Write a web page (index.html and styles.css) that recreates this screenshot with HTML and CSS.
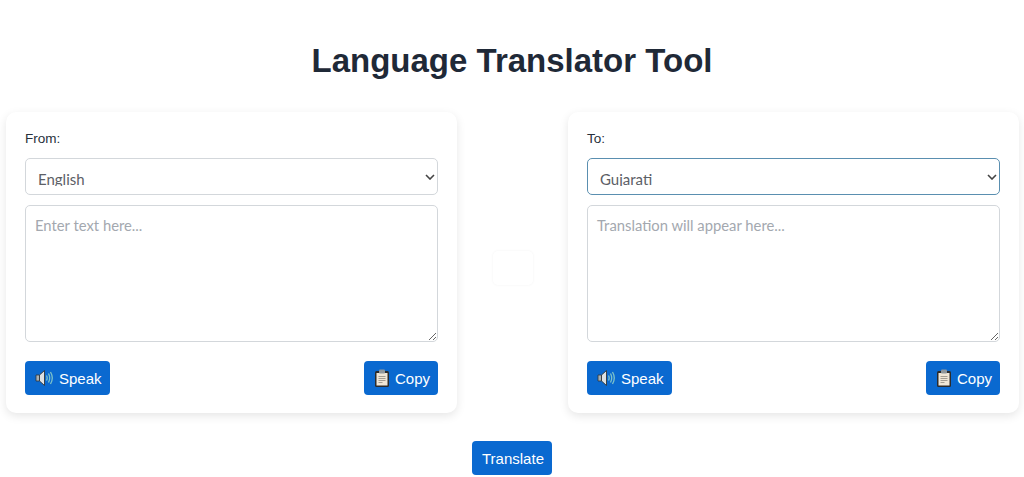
FILE: index.html
```html
<!DOCTYPE html>
<html lang="en">
	<head>
		<meta charset="UTF-8">
		<title>Language Translator Tool</title>
		<link rel="stylesheet" href="styles.css">
	</head>
	<body>
		<h1 class="title">Language Translator Tool</h1>
		<div class="panels">
			<div class="card">
				<label class="fieldLabel" for="fromLang">From:</label>
				<div class="selectWrap">
					<select id="fromLang" class="langSelect">
						<option>English</option>
						<option>Gujarati</option>
					</select>
					<svg class="chevron" viewBox="0 0 10 6"><path d="M1 1l4 4 4-4" /></svg>
				</div>
				<textarea class="textBox" placeholder="Enter text here..."></textarea>
				<div class="actions">
					<button class="btn" type="button">
						<svg class="icon" viewBox="0 0 18 18">
							<path d="M1 6h3.5v6H1z" fill="#a9b1b5" stroke="#30363a" stroke-width=".8" />
							<path d="M4.5 6L9.5 1.5v15l-5-4.5z" fill="#dde1e3" stroke="#30363a" stroke-width=".9" />
							<path d="M11.5 6.5c.8 1.5.8 3.5 0 5M13.5 4.5c1.5 2.8 1.5 6.2 0 9M15.5 3c2.2 3.7 2.2 8.3 0 12" fill="none" stroke="#7fc4c9" stroke-width="1.3" />
						</svg>
						Speak
					</button>
					<button class="btn" type="button">
						<svg class="icon iconCopy" viewBox="0 0 16 18">
							<rect x="1" y="2" width="14" height="16" rx="1.5" fill="#2b2b2b" />
							<rect x="2.5" y="4" width="11" height="12.5" fill="#efe6d6" />
							<rect x="5" y="0.5" width="6" height="4" rx="1" fill="#8f979c" />
							<path d="M4.5 7.5h7M4.5 9.5h7M4.5 11.5h7M4.5 13.5h4" stroke="#9a948a" stroke-width=".9" />
						</svg>
						Copy
					</button>
				</div>
			</div>
			<button class="swap" type="button" aria-label="Swap languages"></button>
			<div class="card">
				<label class="fieldLabel" for="toLang">To:</label>
				<div class="selectWrap">
					<select id="toLang" class="langSelect focused">
						<option>Gujarati</option>
						<option>English</option>
					</select>
					<svg class="chevron" viewBox="0 0 10 6"><path d="M1 1l4 4 4-4" /></svg>
				</div>
				<textarea class="textBox" placeholder="Translation will appear here..."></textarea>
				<div class="actions">
					<button class="btn" type="button">
						<svg class="icon" viewBox="0 0 18 18">
							<path d="M1 6h3.5v6H1z" fill="#a9b1b5" stroke="#30363a" stroke-width=".8" />
							<path d="M4.5 6L9.5 1.5v15l-5-4.5z" fill="#dde1e3" stroke="#30363a" stroke-width=".9" />
							<path d="M11.5 6.5c.8 1.5.8 3.5 0 5M13.5 4.5c1.5 2.8 1.5 6.2 0 9M15.5 3c2.2 3.7 2.2 8.3 0 12" fill="none" stroke="#7fc4c9" stroke-width="1.3" />
						</svg>
						Speak
					</button>
					<button class="btn" type="button">
						<svg class="icon iconCopy" viewBox="0 0 16 18">
							<rect x="1" y="2" width="14" height="16" rx="1.5" fill="#2b2b2b" />
							<rect x="2.5" y="4" width="11" height="12.5" fill="#efe6d6" />
							<rect x="5" y="0.5" width="6" height="4" rx="1" fill="#8f979c" />
							<path d="M4.5 7.5h7M4.5 9.5h7M4.5 11.5h7M4.5 13.5h4" stroke="#9a948a" stroke-width=".9" />
						</svg>
						Copy
					</button>
				</div>
			</div>
		</div>
		<div class="translateRow">
			<button class="btn" type="button">Translate</button>
		</div>
	</body>
</html>
```
FILE: styles.css
```css
body {
	margin: 0;
	height: 477px;
	overflow: hidden;
	background-color: white;
	font-family: "Liberation Sans", Arial, sans-serif;
}
.title {
	margin: 0;
	padding-top: 41px;
	height: 112px;
	box-sizing: border-box;
	text-align: center;
	font-size: 33px;
	line-height: 40px;
	font-weight: bold;
	color: #1f2937;
}
.panels {
	display: flex;
	justify-content: space-between;
	align-items: center;
	padding: 0 5px 0 6px;
}
.card {
	width: 451px;
	height: 301px;
	box-sizing: border-box;
	padding: 18px 19px;
	border-radius: 10px;
	background-color: white;
	box-shadow: 0 3px 10px rgba(0, 0, 0, 0.1);
}
.fieldLabel {
	display: block;
	height: 28px;
	font-size: 13.5px;
	line-height: 18px;
	color: #27303b;
}
.selectWrap {
	position: relative;
	height: 37px;
	margin-bottom: 10px;
}
.langSelect {
	display: block;
	width: 100%;
	height: 37px;
	box-sizing: border-box;
	padding: 12px 12px 8px 12px;
	border: 1px solid #d3d7db;
	border-radius: 5px;
	appearance: none;
	background-color: white;
	font-family: Lato, sans-serif;
	font-size: 15px;
	line-height: 16px;
	color: #5c6066;
	outline: none;
}
.focused {
	border-color: #5a8fb0;
}
.chevron {
	position: absolute;
	right: 3px;
	top: 16px;
	width: 10px;
	height: 6px;
	fill: none;
	stroke: #444;
	stroke-width: 1.6;
}
.textBox {
	display: block;
	width: 100%;
	height: 137px;
	box-sizing: border-box;
	padding: 8px 9px;
	border: 1px solid #d3d7db;
	border-radius: 5px;
	font-family: Lato, sans-serif;
	font-size: 14.8px;
	line-height: 22px;
	color: #333;
	outline: none;
}
.textBox::placeholder {
	color: #a3a8af;
}
.actions {
	display: flex;
	justify-content: space-between;
	margin-top: 19px;
}
.btn {
	display: inline-flex;
	align-items: center;
	height: 34px;
	padding: 0 8px 0 10px;
	border: none;
	border-radius: 4px;
	background-color: #0a69d0;
	color: white;
	font-family: "Liberation Sans", Arial, sans-serif;
	font-size: 15px;
	cursor: pointer;
}
.icon {
	width: 18px;
	height: 18px;
	margin-right: 6px;
}
.iconCopy {
	width: 16px;
	margin-right: 5px;
}
.swap {
	width: 40px;
	height: 34px;
	margin-top: 10px;
	border: none;
	border-radius: 5px;
	background-color: white;
	box-shadow: 0 0 3px rgba(0, 0, 0, 0.05);
}
.translateRow {
	display: flex;
	justify-content: center;
	margin-top: 28px;
}
```
